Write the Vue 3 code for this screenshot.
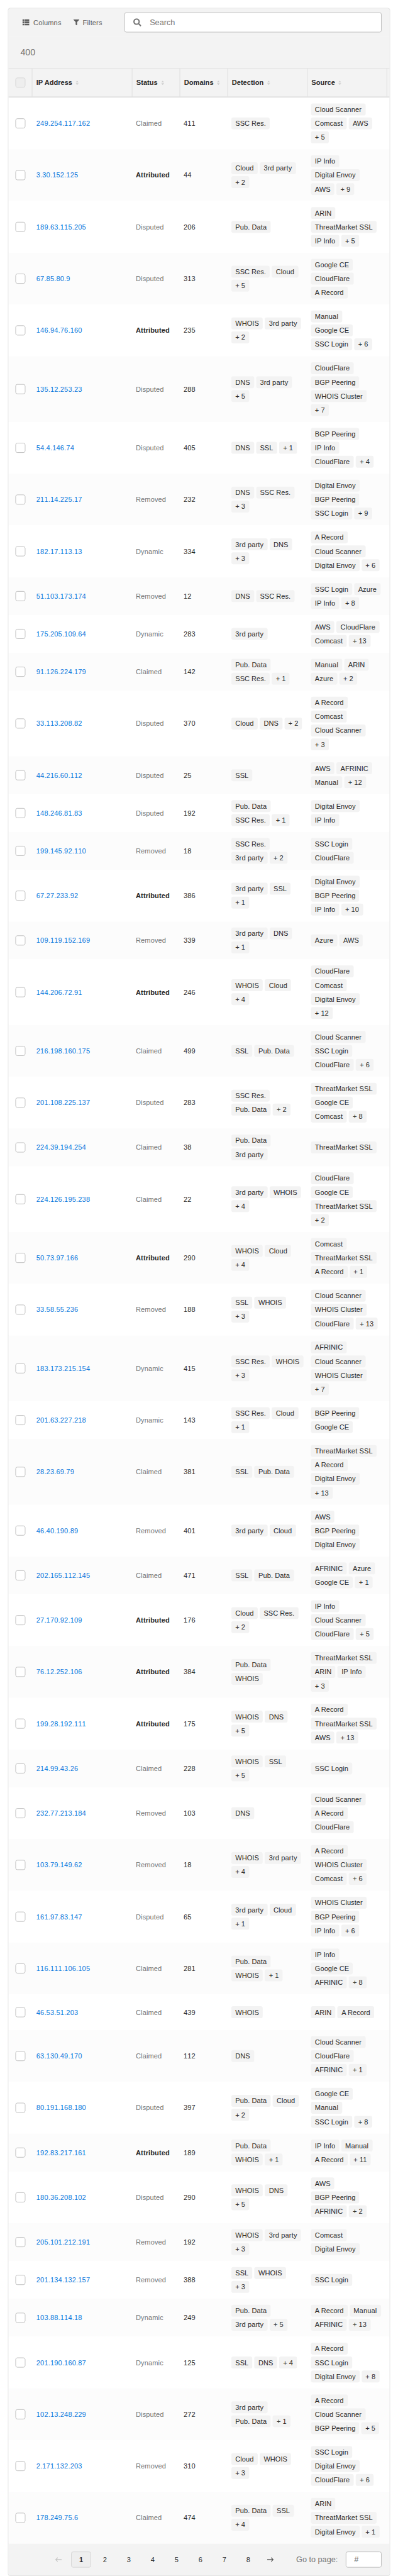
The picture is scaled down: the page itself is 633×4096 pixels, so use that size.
<script setup>
const columns = [
  { label: 'IP Address', cls: 'c-ip' },
  { label: 'Status', cls: 'c-status' },
  { label: 'Domains', cls: 'c-domains' },
  { label: 'Detection', cls: 'c-tags' },
  { label: 'Source', cls: 'c-tags' },
]

// ip | status | domains | detection | source; "/" starts a new tag line, "," separates tags
const source = `
249.254.117.162|Claimed|411|SSC Res.|Cloud Scanner/Comcast,AWS/+ 5
3.30.152.125|Attributed|44|Cloud,3rd party/+ 2|IP Info/Digital Envoy/AWS,+ 9
189.63.115.205|Disputed|206|Pub. Data|ARIN/ThreatMarket SSL/IP Info,+ 5
67.85.80.9|Disputed|313|SSC Res.,Cloud/+ 5|Google CE/CloudFlare/A Record
146.94.76.160|Attributed|235|WHOIS,3rd party/+ 2|Manual/Google CE/SSC Login,+ 6
135.12.253.23|Disputed|288|DNS,3rd party/+ 5|CloudFlare/BGP Peering/WHOIS Cluster/+ 7
54.4.146.74|Disputed|405|DNS,SSL,+ 1|BGP Peering/IP Info/CloudFlare,+ 4
211.14.225.17|Removed|232|DNS,SSC Res./+ 3|Digital Envoy/BGP Peering/SSC Login,+ 9
182.17.113.13|Dynamic|334|3rd party,DNS/+ 3|A Record/Cloud Scanner/Digital Envoy,+ 6
51.103.173.174|Removed|12|DNS,SSC Res.|SSC Login,Azure/IP Info,+ 8
175.205.109.64|Dynamic|283|3rd party|AWS,CloudFlare/Comcast,+ 13
91.126.224.179|Claimed|142|Pub. Data/SSC Res.,+ 1|Manual,ARIN/Azure,+ 2
33.113.208.82|Disputed|370|Cloud,DNS,+ 2|A Record/Comcast/Cloud Scanner/+ 3
44.216.60.112|Disputed|25|SSL|AWS,AFRINIC/Manual,+ 12
148.246.81.83|Disputed|192|Pub. Data/SSC Res.,+ 1|Digital Envoy/IP Info
199.145.92.110|Removed|18|SSC Res./3rd party,+ 2|SSC Login/CloudFlare
67.27.233.92|Attributed|386|3rd party,SSL/+ 1|Digital Envoy/BGP Peering/IP Info,+ 10
109.119.152.169|Removed|339|3rd party,DNS/+ 1|Azure,AWS
144.206.72.91|Attributed|246|WHOIS,Cloud/+ 4|CloudFlare/Comcast/Digital Envoy/+ 12
216.198.160.175|Claimed|499|SSL,Pub. Data|Cloud Scanner/SSC Login/CloudFlare,+ 6
201.108.225.137|Disputed|283|SSC Res./Pub. Data,+ 2|ThreatMarket SSL/Google CE/Comcast,+ 8
224.39.194.254|Claimed|38|Pub. Data/3rd party|ThreatMarket SSL
224.126.195.238|Claimed|22|3rd party,WHOIS/+ 4|CloudFlare/Google CE/ThreatMarket SSL/+ 2
50.73.97.166|Attributed|290|WHOIS,Cloud/+ 4|Comcast/ThreatMarket SSL/A Record,+ 1
33.58.55.236|Removed|188|SSL,WHOIS/+ 3|Cloud Scanner/WHOIS Cluster/CloudFlare,+ 13
183.173.215.154|Dynamic|415|SSC Res.,WHOIS/+ 3|AFRINIC/Cloud Scanner/WHOIS Cluster/+ 7
201.63.227.218|Dynamic|143|SSC Res.,Cloud/+ 1|BGP Peering/Google CE
28.23.69.79|Claimed|381|SSL,Pub. Data|ThreatMarket SSL/A Record/Digital Envoy/+ 13
46.40.190.89|Removed|401|3rd party,Cloud|AWS/BGP Peering/Digital Envoy
202.165.112.145|Claimed|471|SSL,Pub. Data|AFRINIC,Azure/Google CE,+ 1
27.170.92.109|Attributed|176|Cloud,SSC Res./+ 2|IP Info/Cloud Scanner/CloudFlare,+ 5
76.12.252.106|Attributed|384|Pub. Data/WHOIS|ThreatMarket SSL/ARIN,IP Info/+ 3
199.28.192.111|Attributed|175|WHOIS,DNS/+ 5|A Record/ThreatMarket SSL/AWS,+ 13
214.99.43.26|Claimed|228|WHOIS,SSL/+ 5|SSC Login
232.77.213.184|Removed|103|DNS|Cloud Scanner/A Record/CloudFlare
103.79.149.62|Removed|18|WHOIS,3rd party/+ 4|A Record/WHOIS Cluster/Comcast,+ 6
161.97.83.147|Disputed|65|3rd party,Cloud/+ 1|WHOIS Cluster/BGP Peering/IP Info,+ 6
116.111.106.105|Claimed|281|Pub. Data/WHOIS,+ 1|IP Info/Google CE/AFRINIC,+ 8
46.53.51.203|Claimed|439|WHOIS|ARIN,A Record
63.130.49.170|Claimed|112|DNS|Cloud Scanner/CloudFlare/AFRINIC,+ 1
80.191.168.180|Disputed|397|Pub. Data,Cloud/+ 2|Google CE/Manual/SSC Login,+ 8
192.83.217.161|Attributed|189|Pub. Data/WHOIS,+ 1|IP Info,Manual/A Record,+ 11
180.36.208.102|Disputed|290|WHOIS,DNS/+ 5|AWS/BGP Peering/AFRINIC,+ 2
205.101.212.191|Removed|192|WHOIS,3rd party/+ 3|Comcast/Digital Envoy
201.134.132.157|Removed|388|SSL,WHOIS/+ 3|SSC Login
103.88.114.18|Dynamic|249|Pub. Data/3rd party,+ 5|A Record,Manual/AFRINIC,+ 13
201.190.160.87|Dynamic|125|SSL,DNS,+ 4|A Record/SSC Login/Digital Envoy,+ 8
102.13.248.229|Disputed|272|3rd party/Pub. Data,+ 1|A Record/Cloud Scanner/BGP Peering,+ 5
2.171.132.203|Removed|310|Cloud,WHOIS/+ 3|SSC Login/Digital Envoy/CloudFlare,+ 6
178.249.75.6|Claimed|474|Pub. Data,SSL/+ 4|ARIN/ThreatMarket SSL/Digital Envoy,+ 1
`

const toLines = (text) => text.split('/').map((line) => line.split(','))
const rows = source.trim().split('\n').map((line) => {
  const [ip, status, domains, detection, origin] = line.split('|')
  return { ip, status, domains, tags: [toLines(detection), toLines(origin)] }
})
const pages = [1, 2, 3, 4, 5, 6, 7, 8]

const loose = ['3rd party', 'ThreatMarket SSL', 'CloudFlare', 'Manual']
const medium = ['Cloud Scanner', 'Comcast', 'Pub. Data', 'Cloud', 'Azure', 'IP Info']
const tracking = (tag) => ({ loose: loose.includes(tag), medium: medium.includes(tag) })
</script>

<template>
  <div class="viewport">
    <div class="page">
      <section class="datatable">
        <div class="toolbar">
          <div class="actions">
            <button class="action columns-btn">
              <svg width="14" height="14" viewBox="0 0 14 14" fill="currentColor">
                <path d="M0 1h4v3.4H0zM5 1h9v3.4H5zM0 5.3h4v3.4H0zM5 5.3h9v3.4H5zM0 9.6h4V13H0zM5 9.6h9V13H5z" />
              </svg>
              <span>Columns</span>
            </button>
            <button class="action filters-btn">
              <svg width="14" height="14" viewBox="0 0 512 512" fill="currentColor">
                <path d="M488 0H24C2.700 0-8 25.900 7 41L192 226v206c0 8 3.800 15 10.200 19.700l80 56C298 518.700 320 507.500 320 488V226L505 41C520 25.900 509.300 0 488 0z" />
              </svg>
              <span>Filters</span>
            </button>
          </div>
          <div class="search">
            <svg width="16" height="16" viewBox="0 0 512 512" fill="currentColor">
              <path d="M505 442.700L405.300 343c-4.500-4.500-10.600-7-17-7H372c27.600-35.300 44-79.700 44-128C416 93.100 322.900 0 208 0S0 93.100 0 208s93.100 208 208 208c48.300 0 92.700-16.400 128-44v16.300c0 6.400 2.500 12.500 7 17l99.700 99.700c9.400 9.400 24.600 9.400 33.900 0l28.300-28.300c9.400-9.400 9.400-24.600.1-34zM208 336c-70.700 0-128-57.200-128-128 0-70.700 57.200-128 128-128 70.700 0 128 57.200 128 128 0 70.700-57.200 128-128 128z" />
            </svg>
            <span>Search</span>
          </div>
        </div>
        <div class="total">400</div>

        <div class="row head">
          <div class="cell c-check"><i class="checkbox off"></i></div>
          <div v-for="col in columns" :key="col.label" class="cell" :class="col.cls">
            <span>{{ col.label }}</span>
            <svg class="sort" width="6" height="9" viewBox="0 0 6 9" fill="currentColor">
              <path d="M3 0L6 3.700H0zM3 9L0 5.300h6z" />
            </svg>
          </div>
        </div>

        <div v-for="row in rows" :key="row.ip" class="row body">
          <div class="cell c-check"><i class="checkbox"></i></div>
          <div class="cell c-ip"><a>{{ row.ip }}</a></div>
          <div class="cell c-status" :class="{ strong: row.status === 'Attributed' }">{{ row.status }}</div>
          <div class="cell c-domains">{{ row.domains }}</div>
          <div v-for="(lines, c) in row.tags" :key="c" class="cell c-tags">
            <div v-for="(line, l) in lines" :key="l" class="line">
              <span v-for="tag in line" :key="tag" class="tag" :class="tracking(tag)">{{ tag }}</span>
            </div>
          </div>
        </div>

        <div class="footer">
          <div class="pager">
            <span class="arrow muted">
              <svg width="13" height="10" viewBox="0 0 13 10" fill="none" stroke="currentColor" stroke-width="1.500">
                <path d="M13 5H1.200M5 1L1 5l4 4" />
              </svg>
            </span>
            <span v-for="p in pages" :key="p" class="num" :class="{ current: p === 1 }">{{ p }}</span>
            <span class="arrow">
              <svg width="13" height="10" viewBox="0 0 13 10" fill="none" stroke="currentColor" stroke-width="1.500">
                <path d="M0 5h11.800M8 1l4 4-4 4" />
              </svg>
            </span>
          </div>
          <span class="goto">Go to page:</span>
          <div class="goto-input">#</div>
        </div>
      </section>
    </div>
  </div>
</template>

<style>
html,
body {
  margin: 0;
  background: #fff;
}
</style>

<style scoped>
.viewport {
  width: 633px;
  height: 4096px;
  overflow: hidden;
}
.page {
  box-sizing: border-box;
  width: 800px;
  height: 5177px;
  padding: 16px 16px 0;
  transform: scale(0.79125, 0.79119);
  transform-origin: 0 0;
  font: 14px/20px "Liberation Sans", Arial, sans-serif;
  color: #2a2a2a;
}
.datatable {
  box-sizing: border-box;
  width: 768px;
  height: 5161px;
  border: 1px solid #d9d9d9;
  border-radius: 4px;
  overflow: hidden;
}
.toolbar {
  display: flex;
  justify-content: space-between;
  padding: 8px 16px 8px 28px;
  background: #f3f3f3;
}
.actions {
  display: flex;
  align-items: center;
  gap: 24px;
  height: 40px;
}
.action {
  display: flex;
  align-items: center;
  padding: 0;
  border: 0;
  background: none;
  font: inherit;
  letter-spacing: 0.15px;
  color: #5c5c5c;
}
.columns-btn span {
  margin-left: 8px;
}
.filters-btn span {
  margin-left: 6px;
}
.filters-btn svg {
  width: 13px;
  height: 12px;
}
.search {
  box-sizing: border-box;
  display: flex;
  align-items: center;
  width: 517px;
  height: 40px;
  padding-left: 17px;
  border: 1px solid #b0b0b0;
  border-radius: 4px;
  background: #fff;
  color: #757575;
  font-size: 16px;
}
.search span {
  margin-left: 17px;
}
.total {
  box-sizing: border-box;
  height: 64px;
  padding: 22px 24px 0;
  background: #f3f3f3;
  color: #757575;
  font-size: 18px;
}
.row {
  display: flex;
}
.cell {
  box-sizing: border-box;
  flex: none;
  display: flex;
  align-items: center;
  padding: 12px 8px;
}
.c-check {
  width: 48px;
  padding: 0 0 0 14px;
}
.c-ip {
  width: 201px;
}
.c-status,
.c-domains {
  width: 96px;
}
.c-tags {
  width: 160px;
}
.checkbox {
  box-sizing: border-box;
  width: 20px;
  height: 20px;
  border: 1px solid #b0b0b0;
  border-radius: 4px;
  background: #fff;
}
.checkbox.off {
  border-color: #d3d3d3;
  background: #eee;
}
.head {
  box-sizing: border-box;
  height: 59px;
  border-top: 1px solid #d9d9d9;
  border-bottom: 2px solid #d9d9d9;
  background: #f3f3f3;
  font-weight: 700;
}
.head .cell {
  border-right: 1px solid #d9d9d9;
}
.sort {
  margin-left: 7px;
  color: #d0d0d0;
}
.body {
  min-height: 72px;
  background: #fff;
}
.body:nth-child(odd) {
  background: #fcfcfc;
}
.body .c-ip,
.body .c-domains {
  font-kerning: none;
  letter-spacing: 0.195px;
}
.body .c-status,
.body .c-domains {
  padding-left: 7px;
}
.body a {
  color: #0a78dc;
}
.body .c-status {
  color: #757575;
  letter-spacing: 0.12px;
}
.body .c-status.strong {
  color: #2a2a2a;
  font-weight: 700;
}
.body .c-tags {
  flex-direction: column;
  align-items: flex-start;
  justify-content: center;
  gap: 4px;
  padding: 12px 7px;
}
.line {
  display: flex;
  gap: 4px;
}
.tag {
  box-sizing: border-box;
  height: 24px;
  padding: 2px 8px;
  border-radius: 4px;
  background: #f3f3f3;
  white-space: nowrap;
}
.tag.medium {
  letter-spacing: 0.09px;
}
.tag.loose {
  letter-spacing: 0.17px;
}
.footer {
  display: flex;
  align-items: center;
  box-sizing: border-box;
  height: 64px;
  padding: 0 16px 0 82px;
  background: #f3f3f3;
}
.pager {
  display: flex;
  gap: 8px;
}
.num,
.arrow {
  box-sizing: border-box;
  display: flex;
  align-items: center;
  justify-content: center;
  width: 40px;
  height: 32px;
}
.arrow {
  color: #555;
}
.arrow:first-child {
  width: 36px;
}
.arrow:last-child {
  width: 32px;
}
.arrow.muted {
  color: #c4c4c4;
}
.num.current {
  border: 1px solid #cfcfcf;
  border-radius: 4px;
  background: #eee;
  font-weight: 700;
}
.goto {
  margin-left: auto;
  color: #757575;
  font-size: 16px;
}
.goto-input {
  box-sizing: border-box;
  width: 72px;
  height: 32px;
  margin-left: 16px;
  padding: 5px 16px;
  border: 1px solid #b0b0b0;
  border-radius: 4px;
  background: #fff;
  color: #757575;
  font-size: 16px;
}
</style>
